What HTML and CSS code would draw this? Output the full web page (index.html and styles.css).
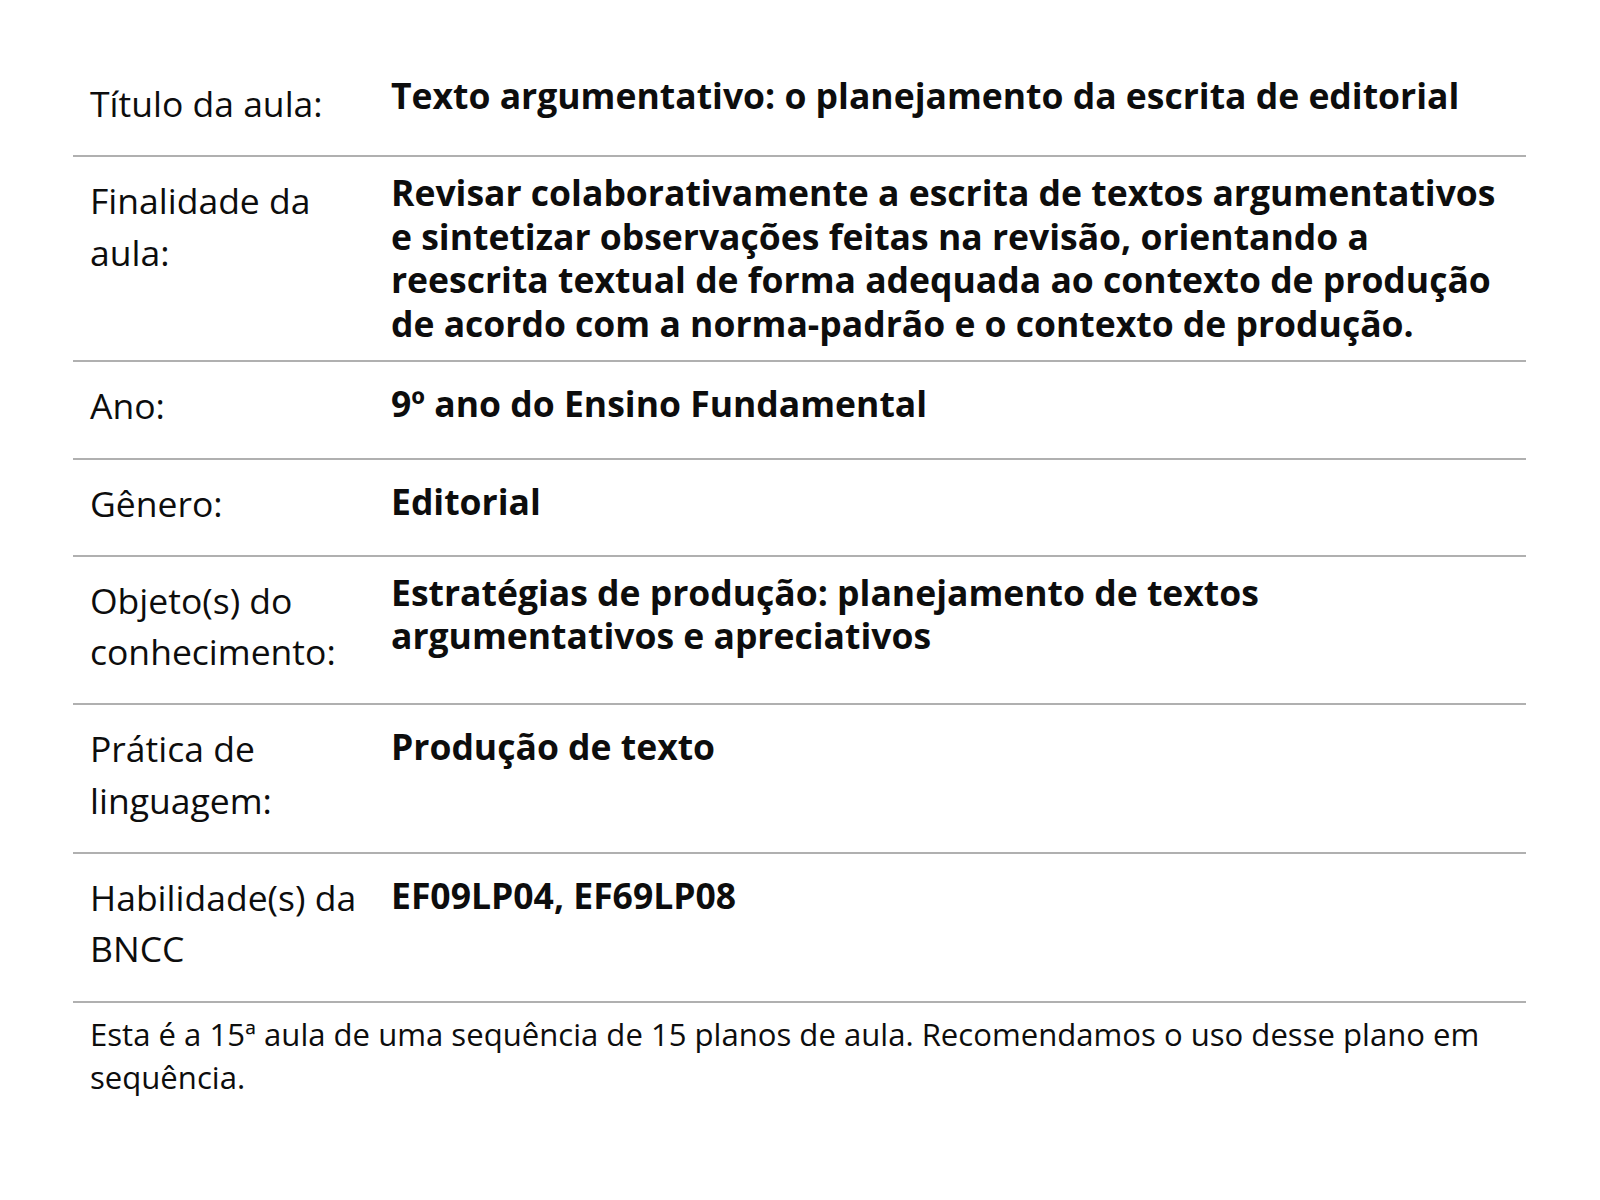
FILE: index.html
```html
<!DOCTYPE html>
<html lang="pt-BR">
<head>
<meta charset="utf-8">
<title>Plano de aula</title>
<link rel="stylesheet" href="styles.css">
</head>
<body>
<div class="page">
  <div class="table">
    <div class="row">
      <div class="label">Título da aula:</div>
      <div class="value hi">Texto argumentativo: o planejamento da escrita de editorial</div>
    </div>
    <div class="row">
      <div class="label">Finalidade da aula:</div>
      <div class="value hi tall">Revisar colaborativamente a escrita de textos argumentativos e sintetizar observações feitas na revisão, orientando a reescrita textual de forma adequada ao contexto de produção de acordo com a norma-padrão e o contexto de produção.</div>
    </div>
    <div class="row">
      <div class="label">Ano:</div>
      <div class="value">9º ano do Ensino Fundamental</div>
    </div>
    <div class="row">
      <div class="label">Gênero:</div>
      <div class="value">Editorial</div>
    </div>
    <div class="row">
      <div class="label">Objeto(s) do conhecimento:</div>
      <div class="value hi">Estratégias de produção: planejamento de textos argumentativos e apreciativos</div>
    </div>
    <div class="row">
      <div class="label">Prática de linguagem:</div>
      <div class="value">Produção de texto</div>
    </div>
    <div class="row">
      <div class="label">Habilidade(s) da BNCC</div>
      <div class="value">EF09LP04, EF69LP08</div>
    </div>
  </div>
  <p class="note">Esta é a 15ª aula de uma sequência de 15 planos de aula. Recomendamos o uso desse plano em sequência.</p>
</div>
</body>
</html>
```

FILE: styles.css
```css
html, body {
  margin: 0;
  padding: 0;
  background: #ffffff;
}

body {
  font-family: "Open Sans", "Noto Sans", sans-serif;
  color: #0d0d0d;
}

.page {
  width: 1453px;
  margin-left: 73px;
  padding-top: 60px;
}

.table {
  display: flex;
  flex-direction: column;
}

.row {
  display: grid;
  grid-template-columns: 318px 1fr;
  border-bottom: 2px solid #b0b0b0;
}

.label {
  padding: 18px 17px 26px 17px;
  font-size: 35.5px;
  line-height: 51.3px;
  font-weight: 400;
}

.value {
  padding: 20px 17px 12px 0;
  font-size: 35.5px;
  line-height: 43.5px;
  font-weight: 700;
}

.value.hi {
  padding-top: 14px;
}

.value.tall {
  padding-bottom: 15px;
}

.note {
  margin: 0;
  padding: 10px 17px 0 17px;
  font-size: 31.1px;
  line-height: 43px;
}
```
